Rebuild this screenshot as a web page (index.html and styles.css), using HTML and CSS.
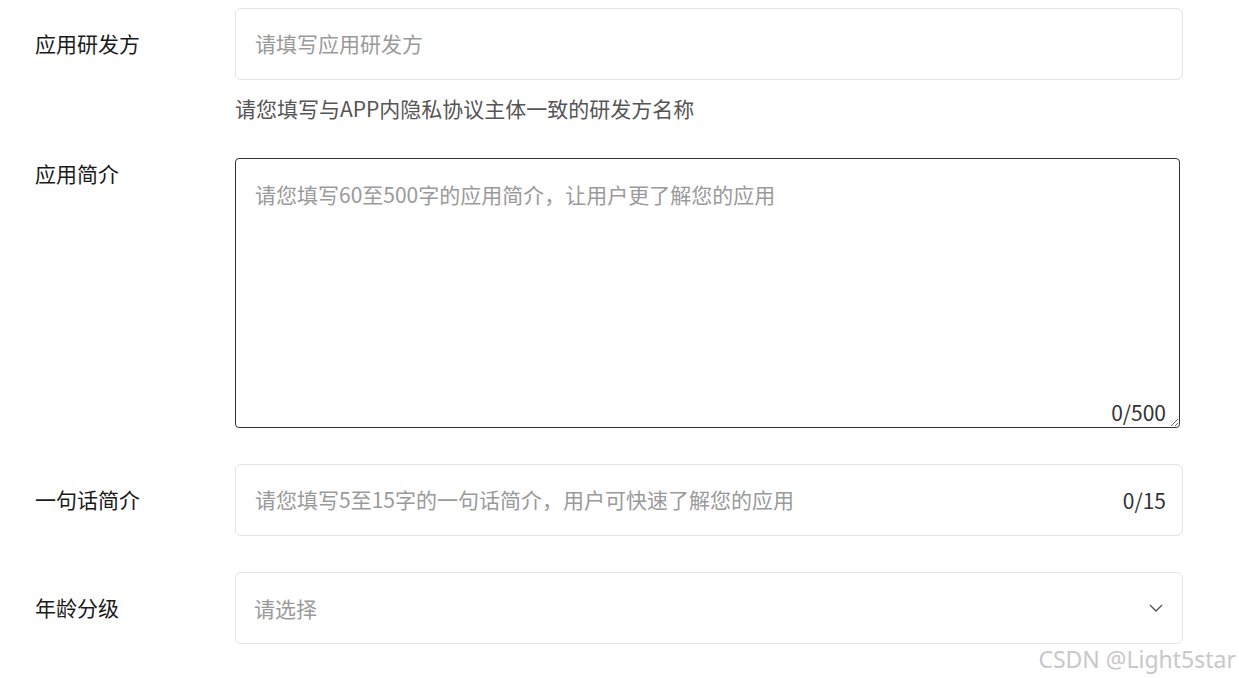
FILE: index.html
```html
<!DOCTYPE html>
<html lang="zh-CN">
<head>
<meta charset="utf-8">
<title>应用信息</title>
<link rel="stylesheet" href="styles.css">
</head>
<body>
<form class="form">
  <div class="row row-first">
    <label class="label label-center">应用研发方</label>
    <div class="field">
      <div class="input-box">
        <input class="input" type="text" placeholder="请填写应用研发方">
      </div>
      <div class="help">请您填写与APP内隐私协议主体一致的研发方名称</div>
    </div>
  </div>
  <div class="row">
    <label class="label label-top">应用简介</label>
    <div class="field">
      <div class="textarea-box">
        <textarea class="textarea" placeholder="请您填写60至500字的应用简介，让用户更了解您的应用"></textarea>
        <span class="count count-area">0/500</span>
      </div>
    </div>
  </div>
  <div class="row">
    <label class="label label-center">一句话简介</label>
    <div class="field">
      <div class="input-box">
        <input class="input" type="text" placeholder="请您填写5至15字的一句话简介，用户可快速了解您的应用">
        <span class="count">0/15</span>
      </div>
    </div>
  </div>
  <div class="row">
    <label class="label label-center">年龄分级</label>
    <div class="field">
      <div class="input-box select-box">
        <span class="select-placeholder">请选择</span>
        <svg class="chevron" width="14" height="8" viewBox="0 0 14 8"><path d="M1 1 L7 7 L13 1" fill="none" stroke="#555" stroke-width="1.4"/></svg>
      </div>
    </div>
  </div>
</form>
<div class="watermark">CSDN @Light5star</div>
</body>
</html>
```

FILE: styles.css
```css
* { box-sizing: border-box; }
html, body {
  margin: 0;
  padding: 0;
  background: #fff;
  width: 1239px;
  height: 678px;
  overflow: hidden;
}
body {
  position: relative;
  font-family: "Noto Sans CJK SC", "Noto Sans", sans-serif;
  font-size: 21px;
  color: #1a1a1a;
}
.form {
  display: flex;
  flex-direction: column;
  gap: 36px;
  padding: 8px 0 0 35px;
}
.row {
  display: flex;
  align-items: flex-start;
}
.label {
  width: 200px;
  flex: none;
  font-size: 21px;
  color: #1a1a1a;
}
.label-center {
  height: 72px;
  line-height: 70px;
}
.label-top {
  line-height: 30px;
}
.field {
  display: flex;
  flex-direction: column;
  width: 948px;
}
.input-box {
  position: relative;
  display: flex;
  align-items: center;
  height: 72px;
  border: 1px solid #e3e3e3;
  border-radius: 6px;
  background: #fff;
}
.input {
  flex: 1;
  height: 100%;
  border: 0;
  outline: none;
  background: transparent;
  padding: 0 19px 2px;
  font-family: inherit;
  font-size: 21px;
  color: #1a1a1a;
}
.input::placeholder,
.textarea::placeholder {
  color: #9a9a9a;
}
.help {
  margin-top: 14px;
  line-height: 28px;
  color: #555;
  font-size: 21px;
}
.textarea-box {
  position: relative;
  width: 945px;
}
.textarea {
  display: block;
  width: 945px;
  height: 270px;
  border: 1px solid #333;
  border-radius: 4px;
  padding: 21px 19px 13px;
  font-family: inherit;
  font-size: 21px;
  line-height: 28px;
  resize: vertical;
  outline: none;
  color: #1a1a1a;
}
.count {
  color: #333;
  font-size: 21px;
  line-height: 28px;
  padding-right: 16px;
  flex: none;
}
.count-area {
  position: absolute;
  right: 0;
  bottom: 2px;
  padding-right: 14px;
}
.select-box {
  justify-content: space-between;
  padding: 0 19px 0 18px;
}
.select-placeholder {
  color: #9a9a9a;
}
.chevron {
  display: block;
}
.watermark {
  position: absolute;
  right: 3px;
  bottom: 5px;
  font-family: "Noto Sans", "DejaVu Sans", sans-serif;
  font-size: 23px;
  color: #c8c8c8;
  line-height: 28px;
}
```
